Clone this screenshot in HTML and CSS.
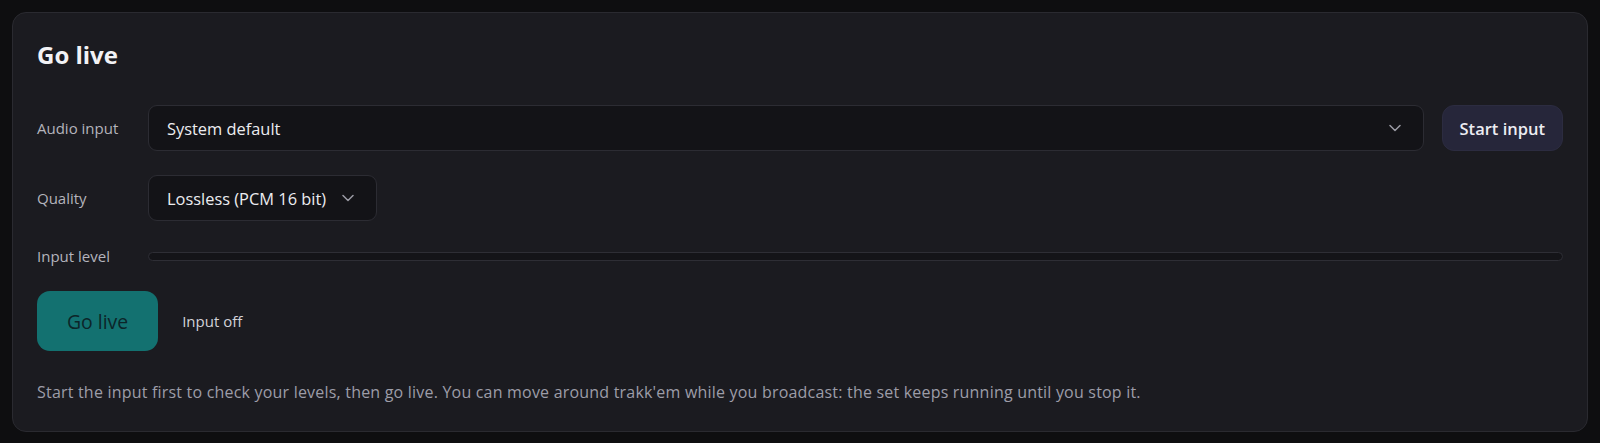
FILE: index.html
```html
<!DOCTYPE html>
<html lang="en">
<head>
<meta charset="utf-8">
<title>Go live</title>
<link rel="stylesheet" href="styles.css">
</head>
<body>
<section class="card">
  <h1 class="title">Go live</h1>
  <div class="rows">
    <div class="row">
      <span class="label">Audio input</span>
      <div class="select select-wide">
        <span>System default</span>
        <svg class="chev" viewBox="0 0 12 8" width="12" height="8"><path d="M1 1.5 L6 6.5 L11 1.5" fill="none" stroke="currentColor" stroke-width="1.5" stroke-linecap="round" stroke-linejoin="round"/></svg>
      </div>
      <button class="btn-secondary">Start input</button>
    </div>
    <div class="row">
      <span class="label">Quality</span>
      <div class="select">
        <span>Lossless (PCM 16 bit)</span>
        <svg class="chev" viewBox="0 0 12 8" width="12" height="8"><path d="M1 1.5 L6 6.5 L11 1.5" fill="none" stroke="currentColor" stroke-width="1.5" stroke-linecap="round" stroke-linejoin="round"/></svg>
      </div>
    </div>
    <div class="row row-level">
      <span class="label">Input level</span>
      <div class="meter"><div class="meter-fill" style="width:0%"></div></div>
    </div>
    <div class="actions">
      <button class="btn-primary">Go live</button>
      <span class="status">Input off</span>
    </div>
  </div>
  <p class="hint">Start the input first to check your levels, then go live. You can move around trakk'em while you broadcast: the set keeps running until you stop it.</p>
</section>
</body>
</html>
```

FILE: styles.css
```css
* { box-sizing: border-box; }
html, body { margin: 0; padding: 0; }
body {
  background: #0e0e10;
  font-family: "Open Sans", "Noto Sans", sans-serif;
  color: #e6e6ea;
  padding: 12px;
}
.card {
  background: #1b1b20;
  border: 1px solid #2a2a30;
  border-radius: 14px;
  padding: 26px 24px 27px 24px;
}
.title {
  margin: 0 0 34px 0;
  font-size: 24px;
  line-height: 32px;
  font-weight: 700;
  color: #f2f2f5;
}
.rows {
  display: flex;
  flex-direction: column;
  gap: 24px;
}
.row {
  display: flex;
  align-items: center;
}
.label {
  width: 111px;
  flex: none;
  font-size: 15px;
  color: #b4b4bc;
}
.select {
  display: flex;
  align-items: center;
  gap: 16px;
  height: 46px;
  padding: 0 22px 0 18px;
  background: #131317;
  border: 1px solid #2c2c33;
  border-radius: 9px;
  font-size: 16.4px;
  color: #ececf0;
}
.select-wide {
  flex: 1;
  justify-content: space-between;
}
.chev { color: #9a9aa4; flex: none; }
.btn-secondary {
  margin-left: 18px;
  height: 46px;
  padding: 0 17px;
  background: #26263a;
  border: 1px solid #2c2c40;
  border-radius: 12px;
  color: #ececf2;
  font-family: inherit;
  font-size: 16.5px;
  font-weight: 600;
}
.row-level { height: 22px; }
.meter {
  flex: 1;
  height: 9px;
  background: #141418;
  border: 1px solid #2e2e35;
  border-radius: 5px;
  overflow: hidden;
}
.meter-fill { height: 100%; background: #167a78; }
.actions {
  display: flex;
  align-items: center;
  gap: 24px;
}
.btn-primary {
  height: 60px;
  padding: 0 30px;
  background: #137170;
  border: none;
  border-radius: 13px;
  color: #0c2529;
  font-family: inherit;
  font-size: 19.4px;
  font-weight: 500;
}
.status {
  font-size: 15px;
  color: #d2d2d8;
}
.hint {
  margin: 29px 0 0 0;
  font-size: 16px;
  letter-spacing: 0.2px;
  line-height: 24px;
  color: #9d9da8;
}
```
